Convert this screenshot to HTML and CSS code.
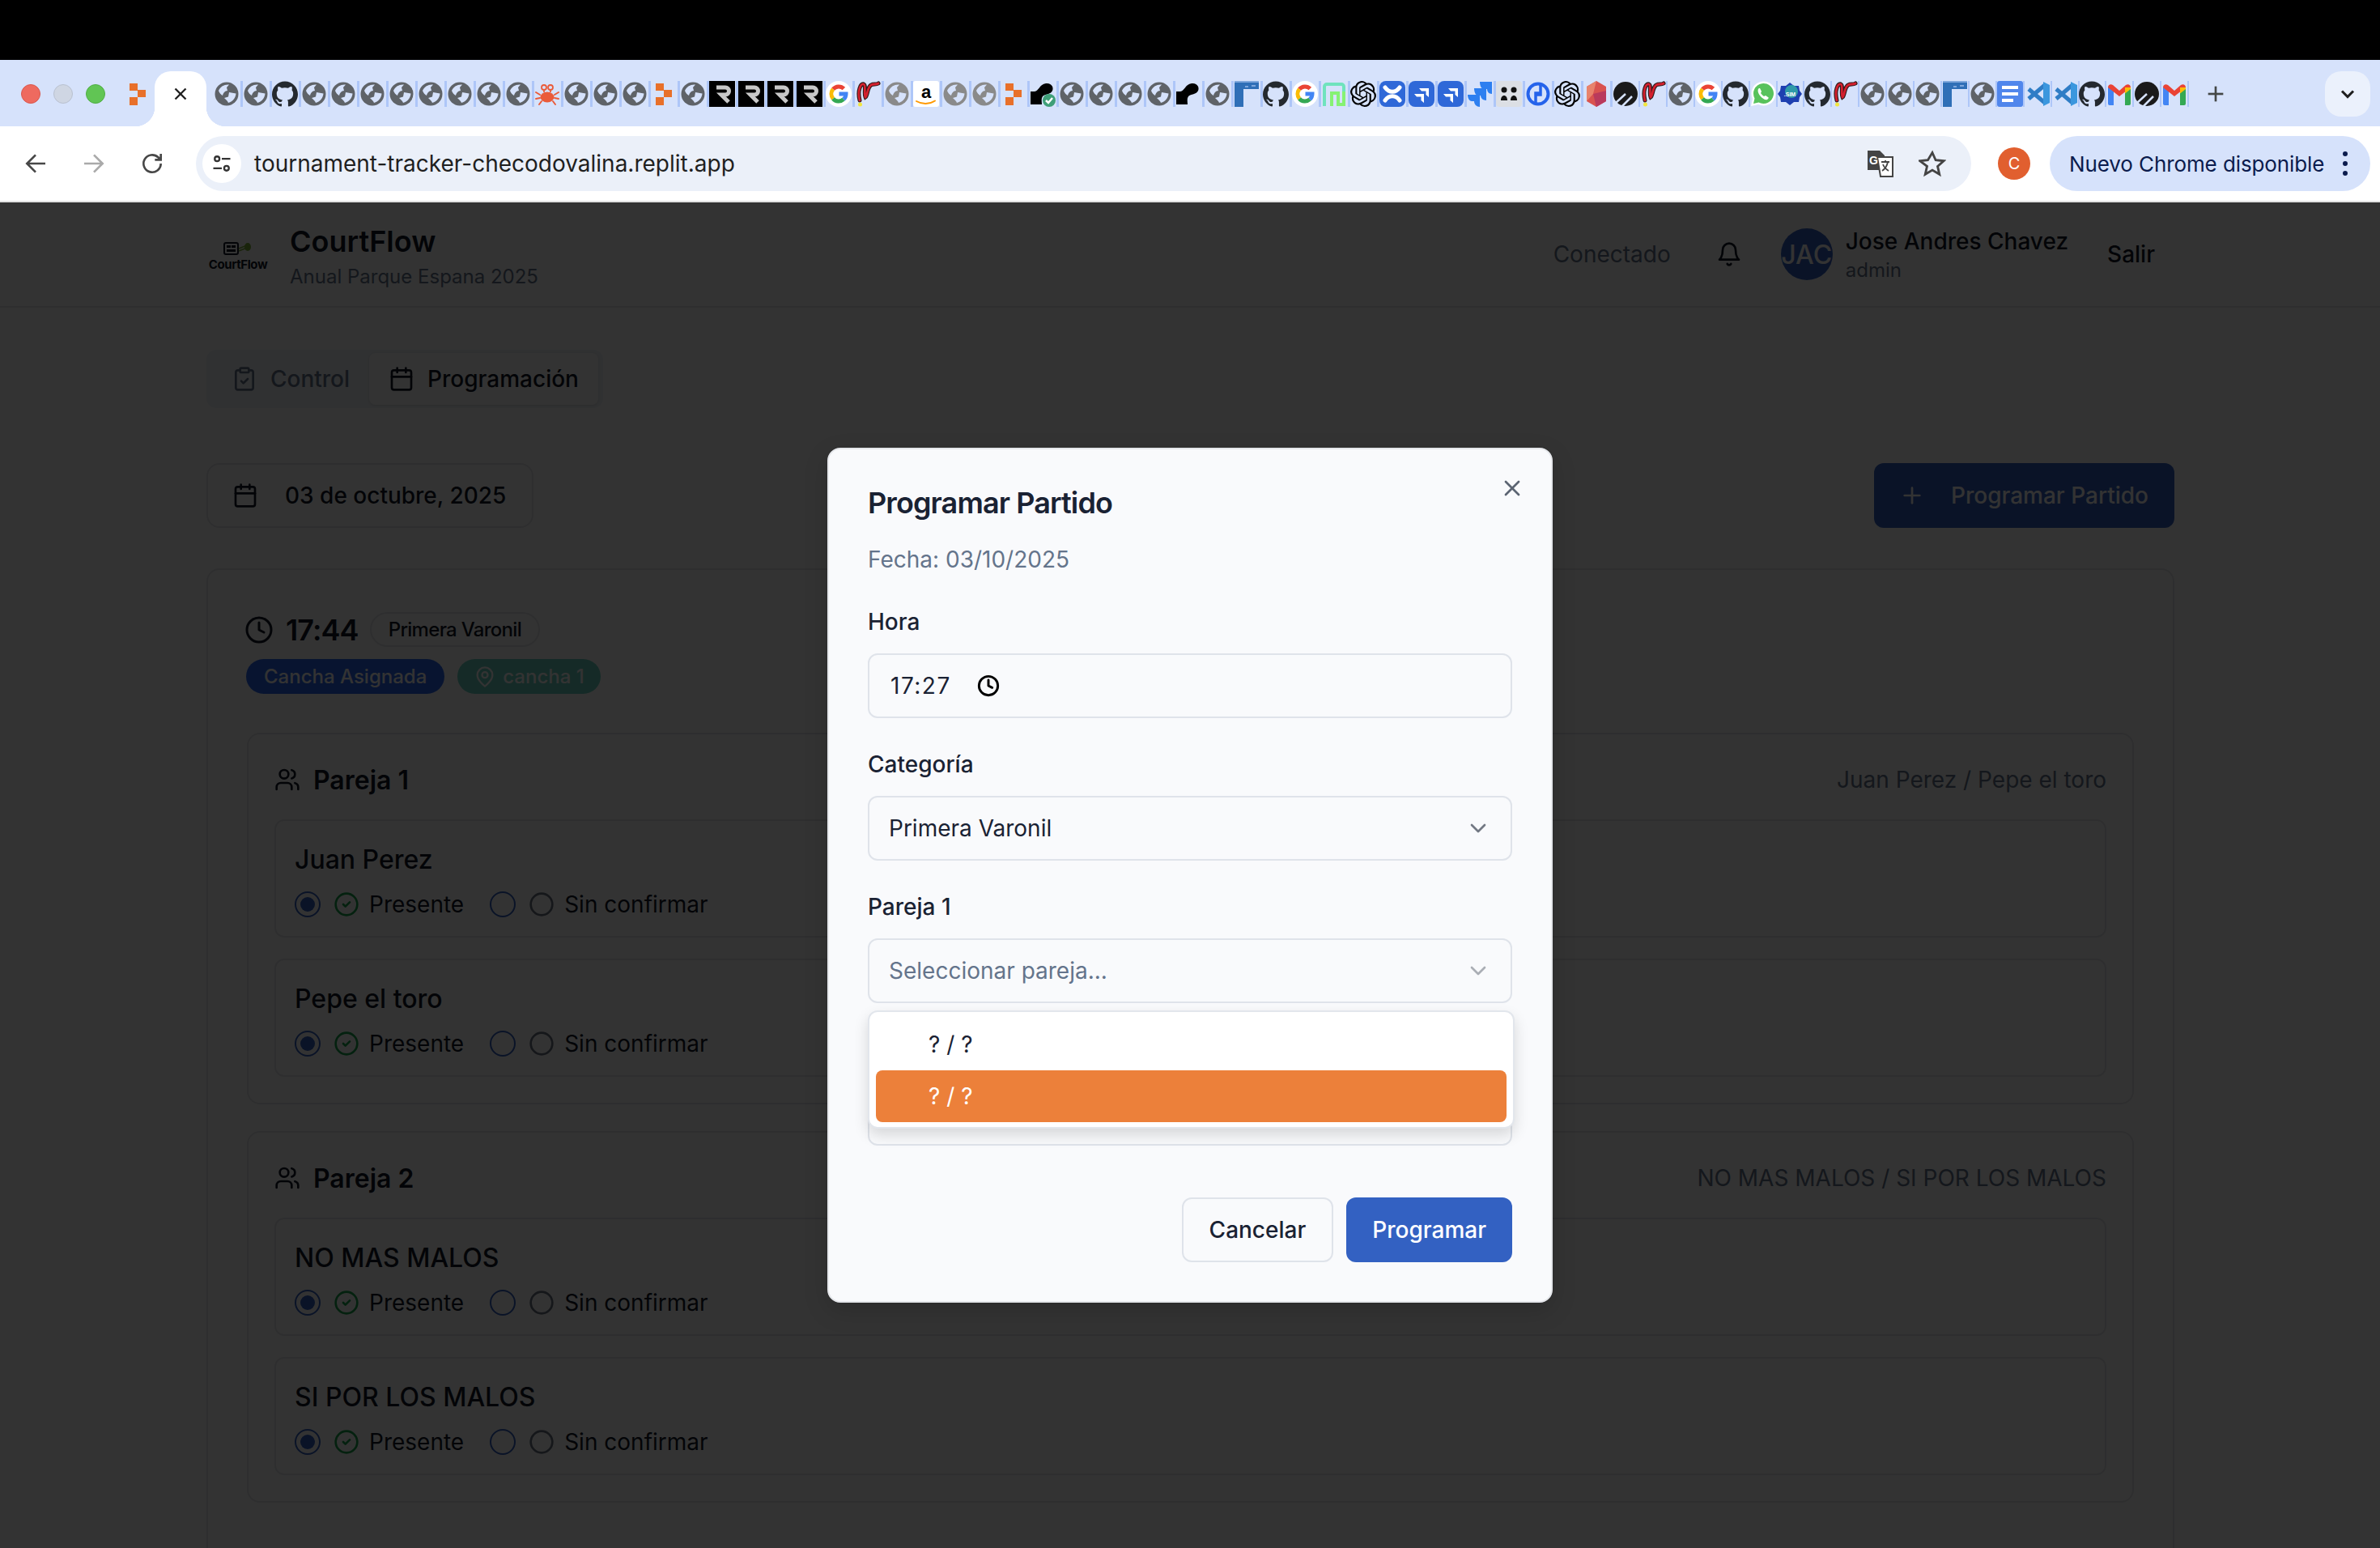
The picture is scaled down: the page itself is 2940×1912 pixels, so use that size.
FILE: index.html
```html
<!DOCTYPE html>
<html lang="es">
<head>
<meta charset="utf-8">
<title>CourtFlow</title>
<link rel="stylesheet" href="styles.css">
</head>
<body>
<svg class="defs" aria-hidden="true">
  <symbol id="i-cal" viewBox="0 0 24 24"><path d="M8 2v4"/><path d="M16 2v4"/><rect width="18" height="18" x="3" y="4" rx="2"/><path d="M3 10h18"/></symbol>
  <symbol id="i-clip" viewBox="0 0 24 24"><rect width="8" height="4" x="8" y="2" rx="1" ry="1"/><path d="M16 4h2a2 2 0 0 1 2 2v14a2 2 0 0 1-2 2H6a2 2 0 0 1-2-2V6a2 2 0 0 1 2-2h2"/><path d="m9 14 2 2 4-4"/></symbol>
  <symbol id="i-clock" viewBox="0 0 24 24"><circle cx="12" cy="12" r="10"/><polyline points="12 6 12 12 16 14"/></symbol>
  <symbol id="i-users" viewBox="0 0 24 24"><path d="M16 21v-2a4 4 0 0 0-4-4H6a4 4 0 0 0-4 4v2"/><circle cx="9" cy="7" r="4"/><path d="M22 21v-2a4 4 0 0 0-3-3.870"/><path d="M16 3.130a4 4 0 0 1 0 7.750"/></symbol>
  <symbol id="i-bell" viewBox="0 0 24 24"><path d="M6 8a6 6 0 0 1 12 0c0 7 3 9 3 9H3s3-2 3-9"/><path d="M10.300 21a1.940 1.940 0 0 0 3.400 0"/></symbol>
  <symbol id="i-pin" viewBox="0 0 24 24"><path d="M20 10c0 6-8 12-8 12s-8-6-8-12a8 8 0 0 1 16 0Z"/><circle cx="12" cy="10" r="3"/></symbol>
  <symbol id="i-ok" viewBox="0 0 24 24"><circle cx="12" cy="12" r="10"/><path d="m9 12 2 2 4-4"/></symbol>
  <symbol id="i-circle" viewBox="0 0 24 24"><circle cx="12" cy="12" r="10"/></symbol>
  <symbol id="i-plus" viewBox="0 0 24 24"><path d="M5 12h14"/><path d="M12 5v14"/></symbol>
  <symbol id="i-x" viewBox="0 0 24 24"><path d="M18 6 6 18"/><path d="m6 6 12 12"/></symbol>
  <symbol id="i-down" viewBox="0 0 24 24"><path d="m6 9 6 6 6-6"/></symbol>

  <symbol id="f-globe" viewBox="0 0 32 32"><circle cx="16" cy="16" r="14.500" fill="currentColor"/><path fill="#d6e2fb" d="M6 12C8 7 13 4 19 4.500l-3 3.500 1 4c-3 .5-5 2-6 6-2-1-4-3-5-6Z"/><path fill="#d6e2fb" d="M19 14l8.500 1.500C27 21 24 25 18 27c-.5-2-3-4-5-6l5-1.500Z"/></symbol>
  <symbol id="f-gh" viewBox="0 0 24 24"><path fill="#24292f" d="M12 .297c-6.630 0-12 5.373-12 12 0 5.303 3.438 9.800 8.205 11.385.6.113.82-.258.82-.577 0-.285-.01-1.040-.015-2.040-3.338.724-4.042-1.610-4.042-1.610C4.422 18.070 3.633 17.700 3.633 17.700c-1.087-.744.084-.729.084-.729 1.205.084 1.838 1.236 1.838 1.236 1.070 1.835 2.809 1.305 3.495.998.108-.776.417-1.305.760-1.605-2.665-.3-5.466-1.332-5.466-5.930 0-1.310.465-2.380 1.235-3.220-.135-.303-.54-1.523.105-3.176 0 0 1.005-.322 3.300 1.230.96-.267 1.980-.399 3-.405 1.020.006 2.040.138 3 .405 2.280-1.552 3.285-1.230 3.285-1.230.645 1.653.24 2.873.12 3.176.765.84 1.230 1.910 1.230 3.220 0 4.610-2.805 5.625-5.475 5.920.42.36.81 1.096.81 2.220 0 1.606-.015 2.896-.015 3.286 0 .315.21.69.825.57C20.565 22.092 24 17.592 24 12.297c0-6.627-5.373-12-12-12"/></symbol>
  <symbol id="f-crab" viewBox="0 0 32 32"><ellipse cx="16" cy="20" rx="8.500" ry="6.500" fill="#ea5b3a"/><path fill="none" stroke="#ea5b3a" stroke-width="2" stroke-linecap="round" d="M7 17l-5-3M7 21l-5 1M9 25l-3 4M25 17l5-3M25 21l5 1M23 25l3 4"/><circle cx="12" cy="8" r="3" fill="none" stroke="#ea5b3a" stroke-width="1.800"/><circle cx="20" cy="8" r="3" fill="none" stroke="#ea5b3a" stroke-width="1.800"/><path fill="none" stroke="#ea5b3a" stroke-width="1.800" d="M12 11v3M20 11v3"/></symbol>
  <symbol id="f-orange" viewBox="0 0 32 32"><path fill="#e8702a" d="M6 3h10v9H6zM16 11h10v9H16zM6 20h10v10H6z"/></symbol>
  <symbol id="f-r" viewBox="0 0 32 32"><rect width="32" height="32" fill="#000"/><path fill="none" stroke="#c8c8c8" stroke-width="5" d="M9 8h11a4.500 4.500 0 0 1 0 9h-5l9 9"/></symbol>
  <symbol id="f-g" viewBox="0 0 32 32"><rect width="32" height="32" rx="16" fill="#fff"/><g fill="none" stroke-width="5"><path stroke="#ea4335" d="M9.100 10.200A9 9 0 0 1 22.400 9.600"/><path stroke="#fbbc05" d="M9.100 10.200A9 9 0 0 0 9.100 21.800"/><path stroke="#34a853" d="M9.100 21.800A9 9 0 0 0 22 22.700"/><path stroke="#4285f4" d="M22 22.700A9 9 0 0 0 25 16H16.500"/></g></symbol>
  <symbol id="f-p" viewBox="0 0 32 32"><g fill="none" stroke-linecap="round"><path stroke="#2a1a1a" stroke-width="5" d="M6 24C3 12 7 3 11 4c3 1 0 12 2 16 3-2 2-12 7-15 3-2 6 0 9-2"/><path stroke="#d4202e" stroke-width="2.800" d="M6 24C3 12 7 3 11 4c3 1 0 12 2 16 3-2 2-12 7-15 3-2 6 0 9-2"/></g><circle cx="6.500" cy="29" r="2.500" fill="#f2e640"/></symbol>
  <symbol id="f-check" viewBox="0 0 32 32"><path fill="#000" d="M1 13h5c5 0 6-9 14-10 7-1 10 5 8 9-2 5-9 4-12 7-2 3-1 6-1 10H1Z"/><circle cx="24" cy="24" r="8" fill="#3f9f78"/><path fill="none" stroke="#fff" stroke-width="2.500" d="m20 24 3 3 5-6"/></symbol>
  <symbol id="f-blob" viewBox="0 0 32 32"><path fill="#000" d="M1 13h5c5 0 6-9 14-10 7-1 10 5 8 9-2 5-9 4-12 7-2 3-1 6-1 10H1Z"/></symbol>
  <symbol id="f-f" viewBox="0 0 32 32"><path fill="#2f6fb7" d="M1 0h30v10H12v22H1Z"/><path fill="#7fa7dc" d="M1 0h30v2H1zM14 6h4v2h-4zM22 5h5v2h-5z"/></symbol>
  <symbol id="f-n" viewBox="0 0 32 32"><g fill="none" stroke-width="4"><path stroke="#6fe3bd" d="M4 31V7a3 3 0 0 1 3-3h18a3 3 0 0 1 3 3v6"/><path stroke="#86f273" d="M28 13v16h-7V15h-8v16"/></g></symbol>
  <symbol id="f-ai" viewBox="0 0 24 24"><path fill="#000" d="M22.282 9.821a5.985 5.985 0 0 0-.516-4.911 6.046 6.046 0 0 0-6.510-2.900A6.065 6.065 0 0 0 4.981 4.182a5.985 5.985 0 0 0-3.998 2.900 6.046 6.046 0 0 0 .743 7.097 5.980 5.980 0 0 0 .511 4.911 6.051 6.051 0 0 0 6.515 2.900A5.985 5.985 0 0 0 13.260 24a6.056 6.056 0 0 0 5.772-4.206 5.989 5.989 0 0 0 3.998-2.900 6.056 6.056 0 0 0-.748-7.073zm-9.022 12.608a4.476 4.476 0 0 1-2.876-1.041l.142-.08 4.778-2.758a.795.795 0 0 0 .393-.681v-6.737l2.020 1.169a.071.071 0 0 1 .038.052v5.583a4.504 4.504 0 0 1-4.495 4.494zm-9.661-4.125a4.471 4.471 0 0 1-.535-3.014l.142.085 4.783 2.758a.771.771 0 0 0 .781 0l5.843-3.368v2.332a.08.08 0 0 1-.033.062L9.740 19.950a4.499 4.499 0 0 1-6.141-1.646zM2.341 7.896a4.485 4.485 0 0 1 2.366-1.973V11.600a.766.766 0 0 0 .388.677l5.814 3.354-2.020 1.169a.076.076 0 0 1-.071 0l-4.830-2.787A4.504 4.504 0 0 1 2.341 7.872zm16.596 3.856L13.104 8.364 15.119 7.200a.076.076 0 0 1 .071 0l4.830 2.791a4.494 4.494 0 0 1-.676 8.104v-5.677a.79.79 0 0 0-.407-.667zm2.011-3.023-.142-.085-4.774-2.782a.776.776 0 0 0-.785 0L9.409 9.230V6.897a.066.066 0 0 1 .028-.061l4.830-2.787a4.499 4.499 0 0 1 6.680 4.660zM8.307 12.863l-2.020-1.164a.08.08 0 0 1-.038-.057V6.074a4.499 4.499 0 0 1 7.376-3.454l-.142.081L8.704 5.459a.795.795 0 0 0-.393.681zm1.098-2.365 2.602-1.500 2.607 1.500v3l-2.598 1.500-2.607-1.500Z"/></symbol>
  <symbol id="f-conf" viewBox="0 0 32 32"><rect width="32" height="32" rx="8" fill="#2f68d8"/><path fill="none" stroke="#fff" stroke-width="5" stroke-linecap="round" d="M7 8c5 7 13 7 18 0M7 24c5-7 13-7 18 0"/></symbol>
  <symbol id="f-jira" viewBox="0 0 32 32"><rect width="32" height="32" rx="8" fill="#2f68d8"/><path fill="#fff" d="M13 9h12v11l-3.500-3v-4.500H16ZM7 16h12v11l-3.500-3v-4.500H10Z"/></symbol>
  <symbol id="f-jl" viewBox="0 0 32 32"><path fill="#2d7ff0" d="M16 1h15v15c-4 0-6-3-6-6h-4c-3 0-5-4-5-9ZM9 9h15v15c-4 0-7-3-7-6h-3c-3 0-5-4-5-9ZM1 17h15v15c-4 0-7-3-7-7H6c-3 0-5-4-5-8Z"/></symbol>
  <symbol id="f-sq" viewBox="0 0 32 32"><rect width="32" height="32" rx="4" fill="#dcdfe4"/><circle cx="10" cy="11" r="3.500" fill="#111"/><circle cx="22" cy="11" r="3.500" fill="#111"/><path fill="#111" d="M6 24c0-8 8-8 8 0ZM18 24c0-8 8-8 8 0Z"/></symbol>
  <symbol id="f-bg" viewBox="0 0 32 32"><circle cx="16" cy="16" r="12.500" fill="none" stroke="#2563eb" stroke-width="4"/><path fill="none" stroke="#2563eb" stroke-width="3.500" d="M13 28V15h5M19 4v13h-5"/></symbol>
  <symbol id="f-gem" viewBox="0 0 32 32"><path fill="#d9534f" d="M16 0l12 7v18l-12 7L4 25V7Z"/><path fill="#e8836c" d="M16 0 4 7v18l8-9Z"/><path fill="#b93a5c" d="m12 16 4 16 12-7V12Z"/></symbol>
  <symbol id="f-dark" viewBox="0 0 32 32"><circle cx="16" cy="16" r="15" fill="#1a1a1a"/><path fill="none" stroke="#d6e2fb" stroke-width="2.500" d="M4 27 16 16M12 31l12-12"/></symbol>
  <symbol id="f-wa" viewBox="0 0 32 32"><path fill="#fff" d="M1 31l2-9A15 15 0 1 1 10 29Z"/><path fill="#58c25c" d="M4 28l1.500-6.500A12.500 12.500 0 1 1 10.500 26.500Z"/><path fill="#fff" d="M11 9c-2 1-2 5 1 9s7 6 9 5 2-3 1-3l-3-2-2 1c-2-1-3-3-4-4l1-2-2-4Z"/></symbol>
  <symbol id="f-docs" viewBox="0 0 32 32"><rect width="32" height="32" rx="3" fill="#5086ec"/><path fill="#fff" d="M6 6h20v4H6zM6 14h20v4H6zM6 22h14v4H6z"/></symbol>
  <symbol id="f-vs" viewBox="0 0 32 32"><g fill="none" stroke="#2f7dc6" stroke-width="5"><path d="M25 5 5 22"/><path d="M5 10l20 17"/></g><path fill="#3b97de" d="M23 1l8 4v22l-8 4Z"/></symbol>
  <symbol id="f-gm" viewBox="0 0 32 32"><path fill="#4285f4" d="M2 8h7v22H4a2 2 0 0 1-2-2Z"/><path fill="#34a853" d="M23 8h7v20a2 2 0 0 1-2 2h-5Z"/><path fill="#ea4335" d="M2 8c0-3 3-5 6-3l8 7 8-7c3-2 6 0 6 3l-14 11Z"/><path fill="#fbbc05" d="M23 8l7 0v2l-7 5.500Z"/></symbol>
</svg>

<div class="osbar"></div>

<div class="strip">
  <div class="lights"><span class="light red"></span><span class="light grey"></span><span class="light green"></span></div>
  <svg class="pinned"><use href="#f-orange"/></svg>
  <div class="tab"><svg class="tab-x"><use href="#i-x"/></svg></div>
  <div class="favs">
    <svg class="fav"><use href="#f-globe"/></svg>
    <svg class="fav"><use href="#f-globe"/></svg>
    <svg class="fav"><use href="#f-gh"/></svg>
    <svg class="fav"><use href="#f-globe"/></svg>
    <svg class="fav"><use href="#f-globe"/></svg>
    <svg class="fav"><use href="#f-globe"/></svg>
    <svg class="fav"><use href="#f-globe"/></svg>
    <svg class="fav"><use href="#f-globe"/></svg>
    <svg class="fav"><use href="#f-globe"/></svg>
    <svg class="fav"><use href="#f-globe"/></svg>
    <svg class="fav"><use href="#f-globe"/></svg>
    <svg class="fav"><use href="#f-crab"/></svg>
    <svg class="fav"><use href="#f-globe"/></svg>
    <svg class="fav"><use href="#f-globe"/></svg>
    <svg class="fav"><use href="#f-globe"/></svg>
    <svg class="fav"><use href="#f-orange"/></svg>
    <svg class="fav"><use href="#f-globe"/></svg>
    <svg class="fav"><use href="#f-r"/></svg>
    <svg class="fav"><use href="#f-r"/></svg>
    <svg class="fav"><use href="#f-r"/></svg>
    <svg class="fav"><use href="#f-r"/></svg>
    <svg class="fav"><use href="#f-g"/></svg>
    <svg class="fav"><use href="#f-p"/></svg>
    <svg class="fav dim"><use href="#f-globe"/></svg>
    <svg class="fav" viewBox="0 0 32 32"><rect width="32" height="32" rx="3" fill="#fff"/><text x="16" y="21" text-anchor="middle" class="fav-t" font-size="22" fill="#000">a</text><path fill="none" stroke="#f90" stroke-width="2" stroke-linecap="round" d="M4 25c7 4 16 4 23-.5"/></svg>
    <svg class="fav dim"><use href="#f-globe"/></svg>
    <svg class="fav dim"><use href="#f-globe"/></svg>
    <svg class="fav"><use href="#f-orange"/></svg>
    <svg class="fav"><use href="#f-check"/></svg>
    <svg class="fav"><use href="#f-globe"/></svg>
    <svg class="fav"><use href="#f-globe"/></svg>
    <svg class="fav"><use href="#f-globe"/></svg>
    <svg class="fav"><use href="#f-globe"/></svg>
    <svg class="fav"><use href="#f-blob"/></svg>
    <svg class="fav"><use href="#f-globe"/></svg>
    <svg class="fav"><use href="#f-f"/></svg>
    <svg class="fav"><use href="#f-gh"/></svg>
    <svg class="fav"><use href="#f-g"/></svg>
    <svg class="fav"><use href="#f-n"/></svg>
    <svg class="fav"><use href="#f-ai"/></svg>
    <svg class="fav"><use href="#f-conf"/></svg>
    <svg class="fav"><use href="#f-jira"/></svg>
    <svg class="fav"><use href="#f-jira"/></svg>
    <svg class="fav"><use href="#f-jl"/></svg>
    <svg class="fav"><use href="#f-sq"/></svg>
    <svg class="fav"><use href="#f-bg"/></svg>
    <svg class="fav"><use href="#f-ai"/></svg>
    <svg class="fav"><use href="#f-gem"/></svg>
    <svg class="fav tight"><use href="#f-dark"/></svg>
    <svg class="fav tight"><use href="#f-p"/></svg>
    <svg class="fav tight"><use href="#f-globe"/></svg>
    <svg class="fav tight"><use href="#f-g"/></svg>
    <svg class="fav tight"><use href="#f-gh"/></svg>
    <svg class="fav tight"><use href="#f-wa"/></svg>
    <svg class="fav tight" viewBox="0 0 32 32"><path fill="#1e3fb0" d="M16 2l5 4 6 0 1 6 3 4-3 4-1 6-6 0-5 4-5-4-6 0-1-6-3-4 3-4 1-6 6 0Z"/><circle cx="18" cy="13" r="8" fill="#2f9aa8"/><text x="16" y="19" text-anchor="middle" class="fav-t" font-size="7" fill="#fff">.SIM</text></svg>
    <svg class="fav tight"><use href="#f-gh"/></svg>
    <svg class="fav tight"><use href="#f-p"/></svg>
    <svg class="fav tight"><use href="#f-globe"/></svg>
    <svg class="fav tight"><use href="#f-globe"/></svg>
    <svg class="fav tight"><use href="#f-globe"/></svg>
    <svg class="fav tight"><use href="#f-f"/></svg>
    <svg class="fav tight"><use href="#f-globe"/></svg>
    <svg class="fav tight"><use href="#f-docs"/></svg>
    <svg class="fav tight"><use href="#f-vs"/></svg>
    <svg class="fav tight"><use href="#f-vs"/></svg>
    <svg class="fav tight"><use href="#f-gh"/></svg>
    <svg class="fav tight"><use href="#f-gm"/></svg>
    <svg class="fav tight"><use href="#f-dark"/></svg>
    <svg class="fav tight"><use href="#f-gm"/></svg>
  </div>
  <svg class="newtab"><use href="#i-plus"/></svg>
  <div class="tabsearch"><svg class="tabsearch-i"><use href="#i-down"/></svg></div>
</div>

<div class="toolbar">
  <svg class="navbtn" viewBox="0 0 24 24"><path d="M21 12H4M12 4l-8 8 8 8"/></svg>
  <svg class="navbtn off" viewBox="0 0 24 24"><path d="M3 12h17M12 4l8 8-8 8"/></svg>
  <svg class="navbtn" viewBox="0 0 24 24"><path d="M20 12a8 8 0 1 1-2.500-5.800L20 8.500M20 3v5.500h-5.500"/></svg>
  <div class="omni">
    <div class="siteinfo"><svg class="siteinfo-i" viewBox="0 0 24 24"><circle cx="7" cy="7" r="2.500"/><path d="M12 7h9M3 17h9"/><circle cx="17" cy="17" r="2.500"/></svg></div>
    <span class="url">tournament-tracker-checodovalina.replit.app</span>
    <svg class="translate" viewBox="0 0 34 34"><path fill="#444" d="M2 1h15l6 6v18H2Z"/><path fill="#fff" stroke="#444" stroke-width="2" d="M14 9h19v24H18Z"/><text x="9.500" y="18" text-anchor="middle" class="tr-t" font-size="14" fill="#fff">G</text><path fill="none" stroke="#444" stroke-width="1.800" d="M19 15h10M24 13v2M27 15c-1 5-4 9-7 11M21 18c1 3 4 6 7 8"/></svg>
    <svg class="star" viewBox="0 0 24 24"><path d="M12 2.500l2.900 6.500 7 .7-5.300 4.700 1.600 7-6.200-3.700-6.200 3.700 1.600-7L1.100 9.700l7-.7Z"/></svg>
  </div>
  <span class="prof">C</span>
  <div class="update">
    <span class="update-t">Nuevo Chrome disponible</span>
    <span class="dots"><i></i><i></i><i></i></span>
  </div>
</div>

<div class="page">
  <header class="hdr">
    <div class="brand">
      <div class="logo">
        <svg class="logo-i" viewBox="0 0 36 16"><rect x="1" y="1" width="17" height="14" rx="2" fill="none" stroke="#111827" stroke-width="2"/><path fill="#111827" d="M4 4h5v3H4zM10 4h5v3h-5zM4 9h11v3H4z"/><path fill="none" stroke="#7fb33a" stroke-width="1.500" d="M19 8l10-4M19 11l10-4"/><ellipse cx="30" cy="6" rx="4" ry="5" fill="#7fb33a"/></svg>
        <span class="logo-t">CourtFlow</span>
      </div>
      <div class="brand-text">
        <div class="brand-name">CourtFlow</div>
        <div class="brand-sub">Anual Parque Espana 2025</div>
      </div>
    </div>
    <div class="userbar">
      <span class="status">Conectado</span>
      <svg class="ic bell"><use href="#i-bell"/></svg>
      <span class="avatar">JAC</span>
      <div class="who">
        <div class="who-name">Jose Andres Chavez</div>
        <div class="who-role">admin</div>
      </div>
      <span class="salir">Salir</span>
    </div>
  </header>

  <main class="main">
    <div class="tabs">
      <div class="trigger muted"><svg class="ic"><use href="#i-clip"/></svg>Control</div>
      <div class="trigger active"><svg class="ic"><use href="#i-cal"/></svg>Programación</div>
    </div>

    <div class="daterow">
      <div class="datecard"><svg class="ic"><use href="#i-cal"/></svg>03 de octubre, 2025</div>
      <div class="addbtn"><svg class="ic"><use href="#i-plus"/></svg>Programar Partido</div>
    </div>

    <section class="match">
      <div class="timerow">
        <svg class="ic clock"><use href="#i-clock"/></svg>
        <span class="time">17:44</span>
        <span class="badge outline">Primera Varonil</span>
      </div>
      <div class="badgerow">
        <span class="badge blue">Cancha Asignada</span>
        <span class="badge teal"><svg class="ic pin"><use href="#i-pin"/></svg>cancha 1</span>
      </div>

      <div class="team">
        <div class="team-h"><span class="team-t"><svg class="ic"><use href="#i-users"/></svg>Pareja 1</span><span class="team-n">Juan Perez / Pepe el toro</span></div>
        <div class="player">
          <div class="pname">Juan Perez</div>
          <div class="opts">
            <span class="radio on"></span><svg class="ic ok"><use href="#i-ok"/></svg><span class="optl">Presente</span>
            <span class="radio second"></span><svg class="ic none"><use href="#i-circle"/></svg><span class="optl">Sin confirmar</span>
          </div>
        </div>
        <div class="player">
          <div class="pname">Pepe el toro</div>
          <div class="opts">
            <span class="radio on"></span><svg class="ic ok"><use href="#i-ok"/></svg><span class="optl">Presente</span>
            <span class="radio second"></span><svg class="ic none"><use href="#i-circle"/></svg><span class="optl">Sin confirmar</span>
          </div>
        </div>
      </div>

      <div class="team">
        <div class="team-h"><span class="team-t"><svg class="ic"><use href="#i-users"/></svg>Pareja 2</span><span class="team-n">NO MAS MALOS / SI POR LOS MALOS</span></div>
        <div class="player">
          <div class="pname">NO MAS MALOS</div>
          <div class="opts">
            <span class="radio on"></span><svg class="ic ok"><use href="#i-ok"/></svg><span class="optl">Presente</span>
            <span class="radio second"></span><svg class="ic none"><use href="#i-circle"/></svg><span class="optl">Sin confirmar</span>
          </div>
        </div>
        <div class="player">
          <div class="pname">SI POR LOS MALOS</div>
          <div class="opts">
            <span class="radio on"></span><svg class="ic ok"><use href="#i-ok"/></svg><span class="optl">Presente</span>
            <span class="radio second"></span><svg class="ic none"><use href="#i-circle"/></svg><span class="optl">Sin confirmar</span>
          </div>
        </div>
      </div>
    </section>
  </main>

  <div class="scrim">
    <div class="modal">
      <svg class="ic close"><use href="#i-x"/></svg>
      <h2 class="m-title">Programar Partido</h2>
      <p class="m-desc">Fecha: 03/10/2025</p>
      <div class="field">
        <div class="label">Hora</div>
        <div class="input"><span class="timeval">17:27</span><svg class="ic timei"><use href="#i-clock"/></svg></div>
      </div>
      <div class="field">
        <div class="label">Categoría</div>
        <div class="input select"><span>Primera Varonil</span><svg class="ic chev"><use href="#i-down"/></svg></div>
      </div>
      <div class="field has-menu">
        <div class="label">Pareja 1</div>
        <div class="input select ph"><span>Seleccionar pareja...</span><svg class="ic chev"><use href="#i-down"/></svg></div>
        <div class="menu">
          <div class="item">? / ?</div>
          <div class="item sel">? / ?</div>
        </div>
      </div>
      <div class="field">
        <div class="label"></div>
        <div class="input"></div>
      </div>
      <div class="m-foot">
        <span class="btn cancel">Cancelar</span>
        <span class="btn primary">Programar</span>
      </div>
    </div>
  </div>
</div>
</body>
</html>
```

FILE: styles.css
```css
* { box-sizing: border-box; }
html, body { margin: 0; padding: 0; }
body {
  width: 2940px;
  height: 1912px;
  overflow: hidden;
  font-family: Inter, "Liberation Sans", sans-serif;
  color: #111827;
  background: #fff;
  display: flex;
  flex-direction: column;
}
.defs { width: 0; height: 0; position: absolute; }
.osbar { height: 74px; background: #000; flex: none; }

/* ---------- browser chrome ---------- */
.strip {
  flex: none;
  height: 82px;
  background: #d6e2fb;
  display: flex;
  align-items: center;
  padding-top: 2px;
  padding-left: 26px;
}
.lights { display: flex; gap: 16px; }
.light { width: 24px; height: 24px; border-radius: 50%; }
.red { background: #ee6a5f; border: 1px solid #d9574d; }
.grey { background: #cfd6e3; border: 1px solid #b9c1d0; }
.green { background: #61c554; border: 1px solid #4fae43; }
.pinned { width: 32px; height: 32px; margin-left: 24px; flex: none; }
.tab {
  position: relative;
  align-self: flex-end;
  flex: none;
  width: 64px;
  height: 68px;
  margin-left: 5px;
  background: #fff;
  border-radius: 20px 20px 0 0;
  display: flex;
  justify-content: center;
  padding-top: 15px;
}
.tab::before, .tab::after {
  content: "";
  position: absolute;
  bottom: 0;
  width: 24px;
  height: 24px;
}
.tab::before { left: -24px; background: radial-gradient(circle at 0 0, transparent 24px, #fff 24.500px); }
.tab::after { right: -24px; background: radial-gradient(circle at 100% 0, transparent 24px, #fff 24.500px); }
.tab-x { width: 26px; height: 26px; fill: none; stroke: #1f1f1f; stroke-width: 2.200; }
.favs { display: flex; margin-left: 9px; flex: none; }
.fav {
  box-sizing: content-box;
  width: 32px;
  height: 32px;
  flex: none;
  padding-right: 1px;
  border-right: 3px solid #aec6f8;
  color: #5f6368;
}
.fav.dim { color: #8a8a8a; }
.fav.tight { padding-right: 0; border-right-width: 2px; margin-right: -.1px; }
.fav-t { font-family: "Liberation Sans", sans-serif; font-weight: 700; }
.newtab { width: 32px; height: 32px; margin-left: 17px; fill: none; stroke: #444746; stroke-width: 2; flex: none; }
.tabsearch {
  margin-left: auto;
  margin-right: 12px;
  width: 56px;
  height: 56px;
  border-radius: 20px;
  background: #ebf1fc;
  display: flex;
  align-items: center;
  justify-content: center;
}
.tabsearch-i { width: 28px; height: 28px; fill: none; stroke: #1f1f1f; stroke-width: 2.600; }

.toolbar {
  flex: none;
  position: relative;
  height: 94px;
  background: #fff;
  border-radius: 16px 16px 0 0;
  border-bottom: 2px solid #e2e2e2;
  display: flex;
  align-items: center;
  padding-left: 8px;
  padding-right: 12px;
}
.navbtn { width: 72px; height: 32px; flex: none; fill: none; stroke: #474747; stroke-width: 2; }
.navbtn.off { stroke: #aaa; }
.omni {
  width: 2193px;
  height: 68px;
  margin-left: 18px;
  border-radius: 34px;
  background: #ebf0f9;
  display: flex;
  align-items: center;
  padding-left: 8px;
  flex: none;
}
.siteinfo { width: 48px; height: 48px; border-radius: 50%; background: #fff; display: flex; align-items: center; justify-content: center; }
.siteinfo-i { width: 28px; height: 28px; fill: none; stroke: #333; stroke-width: 2; }
.url { margin-left: 16px; font-size: 28px; color: #1f1f1f; flex: 1; white-space: nowrap; }
.translate { width: 34px; height: 34px; flex: none; }
.tr-t { font-family: "Liberation Sans", sans-serif; font-weight: 700; }
.star { width: 34px; height: 34px; margin-left: 31px; margin-right: 31px; fill: none; stroke: #444; stroke-width: 2; flex: none; }
.prof {
  margin-left: 33px;
  width: 40px;
  height: 40px;
  border-radius: 50%;
  background: #e15f2f;
  color: #fff;
  font-size: 20px;
  display: flex;
  align-items: center;
  justify-content: center;
  flex: none;
}
.update {
  margin-left: 24px;
  width: 396px;
  height: 68px;
  border-radius: 34px;
  background: #d6e2fb;
  display: flex;
  align-items: center;
  padding-left: 24px;
  flex: none;
}
.update-t { font-size: 26px; letter-spacing: -.1px; color: #0b1b4d; white-space: nowrap; flex: 1; }
.dots { display: flex; flex-direction: column; gap: 6px; margin-right: 28px; }
.dots i { width: 6px; height: 6px; border-radius: 50%; background: #0b1b4d; }

/* ---------- app page ---------- */
.page { flex: 1; position: relative; overflow: hidden; background: #fff; }
.ic { width: 32px; height: 32px; flex: none; fill: none; stroke: currentColor; stroke-width: 2; stroke-linecap: round; stroke-linejoin: round; }

.hdr {
  height: 130px;
  border-bottom: 2px solid #e5e7eb;
  display: flex;
  align-items: center;
  justify-content: space-between;
  padding: 0 254px 0 258px;
}
.brand { display: flex; align-items: center; gap: 28px; }
.logo { width: 72px; display: flex; flex-direction: column; align-items: center; margin-top: 6px; }
.logo-i { width: 36px; height: 16px; }
.logo-t { font-size: 15px; font-weight: 700; line-height: 18px; letter-spacing: -.4px; margin-top: 3px; }
.brand-text { margin-top: 5px; }
.brand-name { font-size: 36px; font-weight: 600; line-height: 46px; }
.brand-sub { font-size: 24px; line-height: 34px; color: #64748b; margin-top: 4px; }
.userbar { display: flex; align-items: center; }
.status { font-size: 28px; color: #64748b; }
.bell { margin-left: 56px; color: #111827; }
.avatar {
  margin-left: 48px;
  width: 64px;
  height: 64px;
  border-radius: 50%;
  background: #3361c2;
  color: #fff;
  font-size: 32px;
  font-weight: 500;
  display: flex;
  align-items: center;
  justify-content: center;
  overflow: hidden;
  flex: none;
}
.who { margin-left: 16px; }
.who-name { font-size: 28px; font-weight: 500; line-height: 36px; margin-top: 1px; }
.who-role { font-size: 24px; line-height: 32px; color: #64748b; margin-top: 2px; }
.salir { margin-left: 48px; margin-right: 24px; font-size: 28px; font-weight: 500; }

.main { padding: 52px 254px 0 255px; }
.tabs {
  display: inline-flex;
  height: 72px;
  padding: 4px 6px 4px 7px;
  border-radius: 12px;
  background: #f1f5f9;
}
.trigger {
  display: flex;
  align-items: center;
  gap: 16px;
  padding: 0 24px;
  font-size: 28px;
  font-weight: 500;
  border-radius: 8px;
}
.trigger.muted { color: #64748b; }
.trigger.active { background: #fff; box-shadow: 0 1px 4px rgba(0,0,0,.12); }

.daterow { display: flex; justify-content: space-between; align-items: center; margin-top: 68px; }
.datecard {
  height: 80px;
  border: 2px solid #e5e7eb;
  border-radius: 16px;
  display: flex;
  align-items: center;
  gap: 33px;
  padding: 0 32px 0 30px;
  font-size: 28px;
  font-weight: 500;
}
.addbtn {
  height: 80px;
  border-radius: 12px;
  background: #3361c2;
  color: #fff;
  display: flex;
  align-items: center;
  gap: 32px;
  padding: 0 32px 0 31px;
  font-size: 28px;
  font-weight: 500;
}

.match {
  margin-top: 50px;
  border: 2px solid #e5e7eb;
  border-radius: 16px;
  padding: 52px 48px 48px;
}
.timerow { display: flex; align-items: center; height: 43px; }
.clock { width: 36px; height: 36px; margin-left: -3px; }
.time { font-size: 36px; font-weight: 600; margin-left: 15px; letter-spacing: -.9px; }
.badge {
  display: inline-flex;
  align-items: center;
  height: 43px;
  border-radius: 22px;
  font-size: 24px;
  font-weight: 500;
  white-space: nowrap;
}
.outline { margin-left: 14px; padding: 0 21px; border: 2px solid #e5e7eb; letter-spacing: -.7px; }
.badgerow { display: flex; gap: 16px; margin-top: 15px; margin-bottom: 48px; margin-left: -1px; }
.blue { background: #2a66f0; color: #fff; padding: 0 22px; }
.teal { background: #69d2c0; color: #fff; padding: 0 20px 0 20px; gap: 8px; }
.pin { width: 28px; height: 28px; }

.team {
  border: 2px solid #e5e7eb;
  border-radius: 16px;
  padding: 32px;
  margin-bottom: 33px;
}
.team-h { display: flex; justify-content: space-between; align-items: center; height: 48px; margin-bottom: 25px; }
.team-t { display: flex; align-items: center; gap: 16px; font-size: 32px; font-weight: 600; }
.team-n { font-size: 28px; color: #64748b; }
.player {
  height: 146px;
  border: 2px solid #e5e7eb;
  border-radius: 12px;
  padding: 24px 23px 22px;
}
.player + .player { margin-top: 26px; }
.pname { font-size: 32px; font-weight: 500; line-height: 48px; }
.opts { display: flex; align-items: center; margin-top: 14px; }
.radio {
  width: 32px;
  height: 32px;
  border-radius: 50%;
  border: 2px solid #3361c2;
  flex: none;
  display: flex;
  align-items: center;
  justify-content: center;
}
.radio.on::after { content: ""; width: 18px; height: 18px; border-radius: 50%; background: #3361c2; }
.radio.second { margin-left: 32px; }
.ok { margin-left: 16px; color: #16a34a; }
.none { margin-left: 16px; color: #6b7280; }
.optl { margin-left: 12px; font-size: 28px; }

/* ---------- dialog ---------- */
.scrim {
  position: absolute;
  inset: 0;
  background: rgba(0,0,0,.8);
  display: flex;
  align-items: center;
  justify-content: center;
}
.modal {
  position: relative;
  width: 896px;
  height: 1056px;
  background: #f9fafc;
  border: 2px solid #e5e7eb;
  border-radius: 16px;
  padding: 46px 48px 48px;
  box-shadow: 0 10px 30px rgba(0,0,0,.15);
}
.close { position: absolute; top: 32px; right: 32px; color: #5b6472; }
.m-title { margin: 0; font-size: 36px; font-weight: 600; line-height: 40px; letter-spacing: -.9px; color: #1a2233; }
.m-desc { margin: 30px 0 0; font-size: 28px; line-height: 40px; color: #64748b; }
.field { margin-top: 37px; }
.has-menu { position: relative; z-index: 1; }
.label { height: 40px; line-height: 40px; font-size: 28px; font-weight: 500; color: #1a2233; margin-bottom: 19px; }
.input {
  height: 80px;
  border: 2px solid #dfe3ea;
  border-radius: 12px;
  display: flex;
  align-items: center;
  padding: 0 24px;
  font-size: 28px;
  color: #1a2233;
}
.select { justify-content: space-between; }
.ph { color: #64748b; }
.chev { color: #1a2233; opacity: .6; }
.ph .chev { opacity: .35; }
.timeval { margin-left: 2px; letter-spacing: 1.500px; }
.timei { margin-left: 32px; width: 28px; height: 28px; color: #000; stroke-width: 2.500; }
.menu {
  position: absolute;
  left: 0;
  top: 148px;
  width: 799px;
  height: 146px;
  padding: 8px;
  background: #fff;
  border: 2px solid #e2e6ec;
  border-radius: 12px;
  box-shadow: 0 8px 18px rgba(0,0,0,.14);
}
.item {
  height: 64px;
  border-radius: 8px;
  padding-left: 65px;
  display: flex;
  align-items: center;
  font-size: 28px;
  color: #1a2233;
}
.item.sel { background: #ec803a; color: #fff; }
.m-foot { display: flex; justify-content: flex-end; gap: 16px; margin-top: 64px; }
.btn {
  height: 80px;
  border-radius: 12px;
  display: flex;
  align-items: center;
  font-size: 28px;
  font-weight: 500;
}
.cancel { border: 2px solid #dfe3ea; color: #1a2233; padding: 0 32px; }
.primary { background: #3361c2; color: #fff; padding: 0 32px; }
```
